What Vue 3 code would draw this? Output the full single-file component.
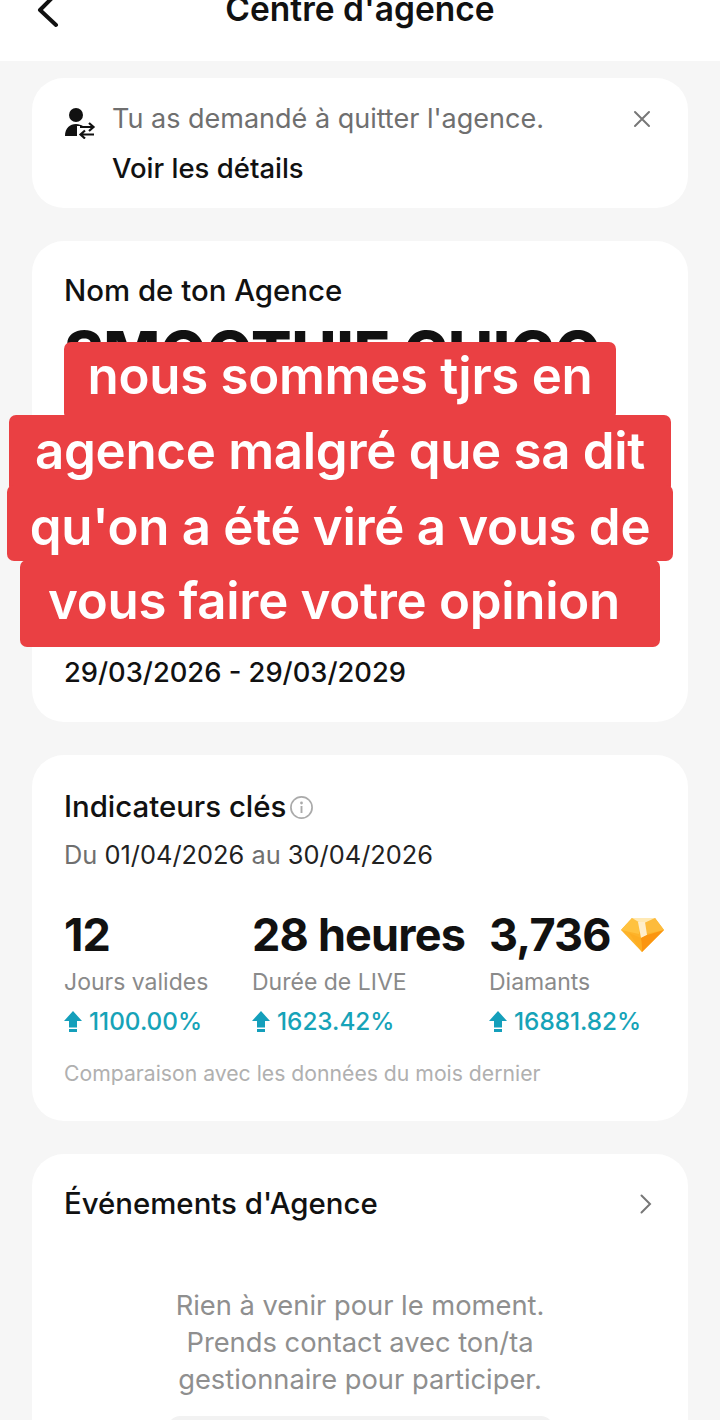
<template>
  <div class="page">
    <header class="topbar">
      <svg class="back" width="28" height="30" viewBox="0 0 28 30">
        <path d="M24 -6 L8 10 L24 25" fill="none" stroke="#111" stroke-width="4" stroke-linecap="round" stroke-linejoin="round" />
      </svg>
      <h1>Centre d'agence</h1>
    </header>

    <main class="content">
      <section class="card notice">
        <svg class="swap-icon" width="32" height="32" viewBox="0 0 32 32">
          <circle cx="12" cy="8" r="7" fill="#111" />
          <path d="M1 29 C1 21 6 17 12 17 C15 17 17 18 19 19 L13 19 L13 29 Z" fill="#111" />
          <path d="M16 20 H29 M25 16 L29.5 20 L25 24" fill="none" stroke="#111" stroke-width="2.2" />
          <path d="M30 27.5 H17 M21 23.5 L16.5 27.5 L21 31.5" fill="none" stroke="#111" stroke-width="2.2" />
        </svg>
        <div class="notice-text">
          <p class="notice-msg">Tu as demandé à quitter l'agence.</p>
          <a class="notice-link">Voir les détails</a>
        </div>
        <svg class="close" width="18" height="18" viewBox="0 0 18 18">
          <path d="M2 2 L16 16 M16 2 L2 16" stroke="#777" stroke-width="2" stroke-linecap="round" />
        </svg>
      </section>

      <section class="card agency">
        <h2 class="label">Nom de ton Agence</h2>
        <div class="agency-name">SMOOTHIE CHICO</div>
        <div class="agency-dates">29/03/2026 - 29/03/2029</div>
      </section>

      <section class="card stats">
        <div class="stats-title">
          <h2 class="label">Indicateurs clés</h2>
          <svg width="25" height="25" viewBox="0 0 25 25">
            <circle cx="12.5" cy="12.5" r="10.6" fill="none" stroke="#aaa" stroke-width="1.7" />
            <circle cx="12.5" cy="8" r="1.4" fill="#aaa" />
            <path d="M12.5 11 V18" stroke="#aaa" stroke-width="1.9" />
          </svg>
        </div>
        <p class="period">Du <b>01/04/2026</b> au <b>30/04/2026</b></p>

        <div class="metrics">
          <div v-for="m in metrics" :key="m.label" class="metric">
            <div class="metric-value">
              {{ m.value }}
              <svg v-if="m.gem" class="gem" width="43" height="35" viewBox="0 0 43 35">
                <polygon points="0,13 11,1 34,1 43,13 21,35" fill="#fdb32a" />
                <polygon points="11,1 20,5 18,17 0,13" fill="#ffc23f" />
                <polygon points="20,5 34,1 43,13 24,17" fill="#fdbb3c" />
                <polygon points="11,1 34,1 21,7" fill="#ffe9b4" />
                <polygon points="17,5 24,5 26,18 20,21" fill="#ffeecb" />
                <polygon points="20,21 26,18 43,13 21,35" fill="#fb9510" />
                <polygon points="8,16 20,21 21,35" fill="#fdad22" />
              </svg>
            </div>
            <div class="metric-label">{{ m.label }}</div>
            <div class="metric-delta">
              <svg width="18" height="21" viewBox="0 0 18 21">
                <path d="M9 0 L18 10 H13 V16.5 H5 V10 H0 Z" fill="#149fbb" />
                <path d="M5 18 H13 V21 H5 Z" fill="#149fbb" />
              </svg>
              {{ m.delta }}
            </div>
          </div>
        </div>
        <p class="compare">Comparaison avec les données du mois dernier</p>
      </section>

      <section class="card events">
        <div class="events-head">
          <h2 class="label">Événements d'Agence</h2>
          <svg width="14" height="22" viewBox="0 0 14 22">
            <path d="M2.5 2.5 L11 11 L2.5 19.5" fill="none" stroke="#777" stroke-width="2" stroke-linecap="round" />
          </svg>
        </div>
        <p class="empty">Rien à venir pour le moment.<br />Prends contact avec ton/ta<br />gestionnaire pour participer.</p>
        <div class="events-btn"></div>
      </section>
    </main>

    <div class="caption">
      <div v-for="line in caption" :key="line.text" class="caption-line" :class="line.cls">{{ line.text }}</div>
    </div>
  </div>
</template>

<script setup>
const metrics = [
  { value: '12', label: 'Jours valides', delta: '1100.00%' },
  { value: '28 heures', label: 'Durée de LIVE', delta: '1623.42%' },
  { value: '3,736', label: 'Diamants', delta: '16881.82%', gem: true }
]

const caption = [
  { text: 'nous sommes tjrs en', cls: 'l1' },
  { text: "agence malgré que sa dit", cls: 'l2' },
  { text: "qu'on a été viré a vous de", cls: 'l3' },
  { text: 'vous faire votre opinion', cls: 'l4' }
]
</script>

<style>
html,
body {
  margin: 0;
  background: #f6f6f6;
}
</style>

<style scoped>
.page {
  position: relative;
  width: 720px;
  height: 1420px;
  overflow: hidden;
  background: #f6f6f6;
  font-family: Inter, "Liberation Sans", sans-serif;
  color: #111;
}

.topbar {
  display: flex;
  justify-content: center;
  height: 61px;
  background: #fff;
  position: relative;
  overflow: hidden;
}

.topbar h1 {
  margin: -10px 0 0;
  font-size: 33.5px;
  line-height: 38px;
  font-weight: 600;
}

.back {
  position: absolute;
  left: 32px;
  top: 0;
}

.content {
  display: flex;
  flex-direction: column;
  gap: 33px;
  padding: 17px 32px 0;
}

.card {
  background: #fff;
  border-radius: 32px;
  padding: 0 32px;
}

.label {
  margin: 0;
  font-size: 29.4px;
  line-height: 34px;
  font-weight: 500;
}

.notice {
  display: flex;
  align-items: flex-start;
  height: 130px;
  box-sizing: border-box;
  padding-top: 24px;
}

.swap-icon {
  margin-top: 5px;
  flex: none;
}

.notice-text {
  flex: 1;
  margin-left: 16px;
}

.notice-msg {
  margin: 0;
  font-size: 27px;
  line-height: 34px;
  color: #6f6f6f;
}

.notice-link {
  display: block;
  margin-top: 15px;
  font-size: 27.5px;
  line-height: 34px;
  font-weight: 500;
}

.close {
  margin: 8px 5px 0 0;
}

.agency {
  height: 481px;
  box-sizing: border-box;
  padding-top: 33px;
}

.agency-name {
  margin-top: 9px;
  font-size: 60px;
  line-height: 72px;
  font-weight: 800;
  white-space: nowrap;
}

.agency-dates {
  margin-top: 267px;
  font-size: 27.3px;
  line-height: 34px;
  font-weight: 500;
}

.stats {
  height: 366px;
  box-sizing: border-box;
  padding-top: 35px;
}

.stats-title {
  display: flex;
  align-items: center;
  gap: 3px;
}

.period {
  margin: 14px 0 0;
  font-size: 25.4px;
  line-height: 34px;
  color: #6f6f6f;
}

.period b {
  font-weight: 400;
  color: #222;
}

.metrics {
  display: grid;
  grid-template-columns: 188px 237px 1fr;
  margin-top: 35px;
}

.metric-value {
  display: flex;
  align-items: center;
  gap: 10px;
  height: 54px;
  font-size: 45px;
  font-weight: 750;
  white-space: nowrap;
  letter-spacing: -0.8px;
}

.metric-label {
  margin-top: 5px;
  font-size: 23px;
  line-height: 32px;
  color: #8a8a8a;
}

.metric-delta {
  display: flex;
  align-items: center;
  gap: 7px;
  margin-top: 7px;
  font-size: 24.3px;
  line-height: 32px;
  font-weight: 500;
  color: #16a3b8;
}

.metric-delta svg {
  flex: none;
}

.compare {
  margin: 21px 0 0;
  font-size: 21.2px;
  line-height: 30px;
  color: #b0b0b0;
  white-space: nowrap;
}

.events {
  height: 400px;
  box-sizing: border-box;
  padding-top: 33px;
}

.events-head {
  display: flex;
  align-items: center;
  justify-content: space-between;
  padding-right: 3px;
}

.empty {
  margin: 66px 0 0;
  font-size: 27.3px;
  line-height: 37px;
  text-align: center;
  color: #8f8f8f;
}

.events-btn {
  width: 385px;
  height: 60px;
  margin: 18px auto 0;
  border-radius: 12px;
  background: #f2f2f2;
}

.caption {
  position: absolute;
  left: 0;
  top: 342px;
  width: 720px;
  height: 305px;
}

.caption-line {
  position: absolute;
  box-sizing: border-box;
  background: #ea4043;
  color: #fff;
  border-radius: 7px;
  font-size: 51px;
  font-weight: 600;
  letter-spacing: -0.3px;
  line-height: 68px;
  text-align: center;
  white-space: pre;
}

.l1 {
  left: 64px;
  width: 552px;
  top: 0;
  height: 78px;
}

.l2 {
  left: 9px;
  width: 662px;
  top: 73px;
  height: 78px;
  padding-top: 2px;
}

.l3 {
  left: 7px;
  width: 666px;
  top: 143px;
  height: 76px;
  padding-top: 8px;
}

.l4 {
  left: 20px;
  width: 640px;
  top: 218px;
  height: 87px;
  padding: 7px 12px 0 0;
}
</style>
